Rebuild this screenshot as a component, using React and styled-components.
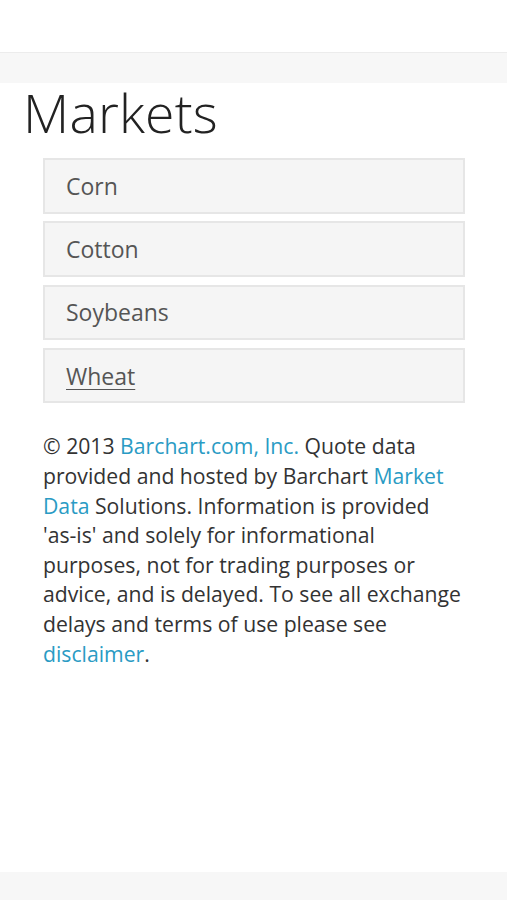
import styled, { createGlobalStyle } from 'styled-components'

const GlobalStyle = createGlobalStyle`
  html, body {
    margin: 0;
    padding: 0;
    background: #fff;
  }
  body {
    font-family: "Open Sans", "Noto Sans", "Liberation Sans", sans-serif;
    color: #333;
  }
`

const Page = styled.div`
  min-height: 900px;
  display: flex;
  flex-direction: column;
`

const TopSpace = styled.div`
  height: 52px;
  border-bottom: 1px solid #ececec;
`

const SubBar = styled.div`
  height: 30px;
  background: #f7f7f7;
`

const Main = styled.main`
  flex: 1;
  padding: 0 42px 0 43px;
`

const Title = styled.h1`
  margin: 2px 0 17px -20px;
  font-size: 53.5px;
  font-weight: 300;
  line-height: 56px;
  color: #222;
  letter-spacing: 0.2px;
`

const MarketList = styled.ul`
  list-style: none;
  margin: 0;
  padding: 0;
  display: flex;
  flex-direction: column;
  gap: 7.8px;
`

const MarketItem = styled.li`
  height: 55.5px;
  box-sizing: border-box;
  border: 2px solid #e6e6e6;
  background: #f5f5f5;
  display: flex;
  align-items: center;
  padding-left: 21px;
`

const MarketLink = styled.a`
  font-size: 23px;
  font-weight: 400;
  color: #555;
  text-decoration: ${p => (p.$active ? 'underline' : 'none')};
  text-underline-offset: 4px;
  text-decoration-thickness: 1px;
`

const Disclaimer = styled.p`
  margin: 28px 0 0;
  font-size: 21.2px;
  line-height: 29.6px;
  color: #333;
`

const Link = styled.a`
  color: #2a9bc4;
  text-decoration: none;
`

const NoBreak = styled.span`
  white-space: nowrap;
`

const Footer = styled.div`
  height: 28px;
  background: #f7f7f7;
`

const markets = ['Corn', 'Cotton', 'Soybeans', 'Wheat']

export default function App() {
  return (
    <>
      <GlobalStyle />
      <Page>
        <TopSpace />
        <SubBar />
        <Main>
          <Title>Markets</Title>
          <MarketList>
            {markets.map(m => (
              <MarketItem key={m}>
                <MarketLink href="#" $active={m === 'Wheat'}>{m}</MarketLink>
              </MarketItem>
            ))}
          </MarketList>
          <Disclaimer>
            © 2013 <Link href="#">Barchart.com, Inc.</Link> Quote data provided and hosted by Barchart{' '}
            <Link href="#">Market Data</Link> Solutions. Information is provided <NoBreak>'as-is'</NoBreak> and
            solely for informational purposes, not for trading purposes or advice, and is delayed. To see all
            exchange delays and terms of use please see <Link href="#">disclaimer</Link>.
          </Disclaimer>
        </Main>
        <Footer />
      </Page>
    </>
  )
}
